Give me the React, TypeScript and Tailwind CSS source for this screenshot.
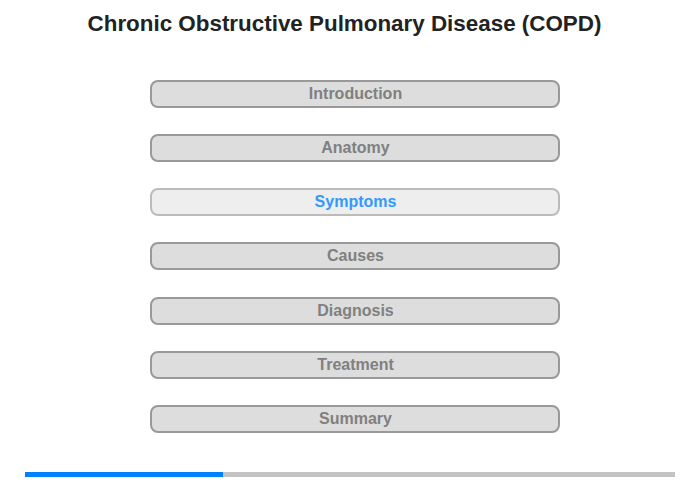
const sections = ['Introduction', 'Anatomy', 'Symptoms', 'Causes', 'Diagnosis', 'Treatment', 'Summary'];
const current = 'Symptoms';

export default function App() {
  return (
    <div className="w-[700px] h-[480px] bg-white flex flex-col font-['Liberation_Sans',Arial,sans-serif]">
      <h1 className="text-center text-[22.4px] font-bold text-[#222222] pt-[10px] pr-[11px] leading-[28px]">
        Chronic Obstructive Pulmonary Disease (COPD)
      </h1>

      {/* Section menu */}
      <div className="flex flex-col items-center gap-[26.17px] mt-[42px] pl-[9px]">
        {sections.map((s) =>
          s === current ? (
            <button
              key={s}
              className="w-[410px] h-[28px] rounded-[8px] border-2 border-[#bbbbbb] bg-[#eeeeee] text-[#3399ff] text-[16px] font-bold leading-none pl-[2px]"
            >
              {s}
            </button>
          ) : (
            <button
              key={s}
              className="w-[410px] h-[28px] rounded-[8px] border-2 border-[#999999] bg-[#dddddd] text-[#808080] text-[16px] font-bold leading-none pl-[2px]"
            >
              {s}
            </button>
          )
        )}
      </div>

      {/* Progress */}
      <div className="mt-auto mb-[3px] mx-[25px] h-[5px] bg-[#c3c3c3] flex">
        <div className="w-[198px] h-full bg-[#0080ff]" />
      </div>
    </div>
  );
}
